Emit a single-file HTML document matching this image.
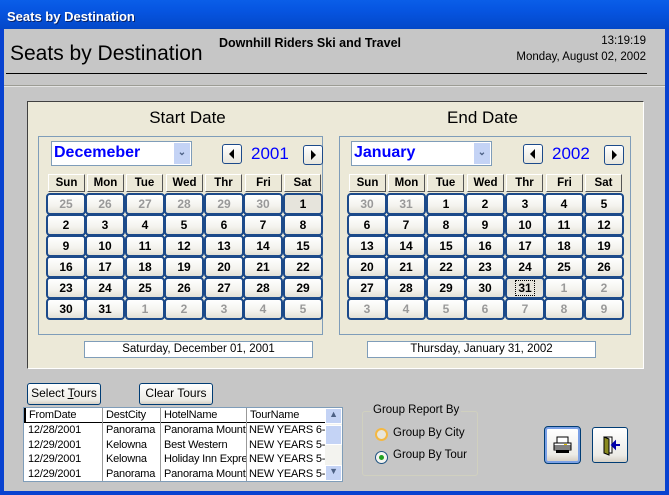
<!DOCTYPE html>
<html><head><style>
*{box-sizing:border-box;margin:0;padding:0}
body{width:669px;height:495px;overflow:hidden;background:#c6c6c6;font-family:"Liberation Sans",sans-serif;position:relative}
.abs{position:absolute}
#title{left:0;top:0;width:669px;height:29px;background:linear-gradient(#0a5ee8,#0654e0 40%,#0348c8);color:#fff;font-weight:bold;font-size:13px;padding:9px 0 0 7px;text-shadow:1px 1px #0a246a}
#lb{left:0;top:29px;width:4px;height:466px;background:#0842d0}
#rb{right:0;top:29px;width:4px;height:466px;background:#0842d0}
#bb{left:0;top:491px;width:669px;height:4px;background:#0842d0}
.cal{border:1px solid #7f9db9}
.hd{position:absolute;height:18px;width:37px;background:#ece9d8;border:1px solid;border-color:#fff #555 #555 #fff;font-size:11.5px;font-weight:bold;text-align:center;line-height:16px}
.c{position:absolute;width:40px;height:22px;background:linear-gradient(#fff,#f4f3ee 60%,#e2e0d6);border:2px solid #1c4a8a;border-radius:4px;font-size:12px;font-weight:bold;text-align:center;line-height:18px;color:#000}
.g{color:#999}
.sel{background:#e6e4dc}
.dd{background:#fff;border:1px solid #7f9db9;color:#0000ff;font-size:16px;font-weight:bold;padding:2px 0 0 2px}
.dda{position:absolute;right:1px;top:1px;width:16px;height:21px;background:#c4d3f5;color:#4d6185;font-size:10px;text-align:center;line-height:20px}
.ab{width:20px;height:20px;background:linear-gradient(#fff,#e8e6dc);border:1px solid #1c4a8a;border-radius:3px}
.yr{color:#0000ff;font-size:17px}
.db{background:#fff;border:1px solid #7f9db9;font-size:11.5px;text-align:center;line-height:15px}
.btn{background:linear-gradient(#fff,#ecebe6 80%,#d6d0c5);border:1px solid #003c74;border-radius:3px;font-size:12px;text-align:center;line-height:19px}
.row{display:flex;height:14.5px}
.row div{overflow:hidden;white-space:nowrap}
</style></head><body>
<div id="title" class="abs">Seats by Destination</div>
<div id="lb" class="abs"></div><div id="rb" class="abs"></div><div id="bb" class="abs"></div>
<div class="abs" style="left:10px;top:42px;font-size:21px">Seats by Destination</div>
<div class="abs" style="left:219px;top:36px;font-size:12.5px;font-weight:bold">Downhill Riders Ski and Travel</div>
<div class="abs" style="left:560px;top:35px;width:86px;text-align:right;font-size:11.5px">13:19:19</div>
<div class="abs" style="left:500px;top:51px;width:146px;text-align:right;font-size:11.5px">Monday, August 02, 2002</div>
<div class="abs" style="left:6px;top:73px;width:641px;height:1px;background:#000"></div>
<div class="abs" style="left:4px;top:85px;width:661px;height:1px;background:#9c9c94"></div>
<div class="abs" style="left:4px;top:86px;width:661px;height:1px;background:#e4e4e4"></div>

<div class="abs" style="left:27px;top:101px;width:617px;height:268px;background:#ece9d8;border:1px solid;border-color:#404040 #fff #fff #404040"></div>
<div class="abs" style="left:100px;top:108px;width:175px;text-align:center;font-size:17px">Start Date</div>
<div class="abs" style="left:395px;top:108px;width:175px;text-align:center;font-size:17px">End Date</div>

<div class="abs cal" style="left:38px;top:136px;width:285px;height:199px"></div>
<div class="abs cal" style="left:339px;top:136px;width:292px;height:199px"></div>

<div class="abs dd" style="left:51px;top:141px;width:141px;height:25px">Decemeber<div class="dda">&#8964;</div></div>
<div class="abs ab" style="left:222px;top:144px"><svg width="18" height="18"><path d="M11 4 L6 9 L11 14Z" fill="#000"/></svg></div>
<div class="abs yr" style="left:251px;top:144px">2001</div>
<div class="abs ab" style="left:303px;top:145px"><svg width="18" height="18"><path d="M7 4 L12 9 L7 14Z" fill="#000"/></svg></div>

<div class="abs dd" style="left:351px;top:141px;width:141px;height:25px">January<div class="dda">&#8964;</div></div>
<div class="abs ab" style="left:523px;top:144px"><svg width="18" height="18"><path d="M11 4 L6 9 L11 14Z" fill="#000"/></svg></div>
<div class="abs yr" style="left:552px;top:144px">2002</div>
<div class="abs ab" style="left:604px;top:145px"><svg width="18" height="18"><path d="M7 4 L12 9 L7 14Z" fill="#000"/></svg></div>

<div class="hd" style="left:48px;top:174px">Sun</div><div class="hd" style="left:87px;top:174px">Mon</div><div class="hd" style="left:126px;top:174px">Tue</div><div class="hd" style="left:166px;top:174px">Wed</div><div class="hd" style="left:205px;top:174px">Thr</div><div class="hd" style="left:245px;top:174px">Fri</div><div class="hd" style="left:284px;top:174px">Sat</div>
<div class="hd" style="left:349px;top:174px">Sun</div><div class="hd" style="left:388px;top:174px">Mon</div><div class="hd" style="left:427px;top:174px">Tue</div><div class="hd" style="left:467px;top:174px">Wed</div><div class="hd" style="left:506px;top:174px">Thr</div><div class="hd" style="left:546px;top:174px">Fri</div><div class="hd" style="left:585px;top:174px">Sat</div>

<div class="c g" style="left:46px;top:193px">25</div><div class="c g" style="left:85px;top:193px">26</div><div class="c g" style="left:125px;top:193px">27</div><div class="c g" style="left:164px;top:193px">28</div><div class="c g" style="left:204px;top:193px">29</div><div class="c g" style="left:243px;top:193px">30</div><div class="c sel" style="left:283px;top:193px">1</div>
<div class="c" style="left:46px;top:214px">2</div><div class="c" style="left:85px;top:214px">3</div><div class="c" style="left:125px;top:214px">4</div><div class="c" style="left:164px;top:214px">5</div><div class="c" style="left:204px;top:214px">6</div><div class="c" style="left:243px;top:214px">7</div><div class="c" style="left:283px;top:214px">8</div>
<div class="c" style="left:46px;top:235px">9</div><div class="c" style="left:85px;top:235px">10</div><div class="c" style="left:125px;top:235px">11</div><div class="c" style="left:164px;top:235px">12</div><div class="c" style="left:204px;top:235px">13</div><div class="c" style="left:243px;top:235px">14</div><div class="c" style="left:283px;top:235px">15</div>
<div class="c" style="left:46px;top:256px">16</div><div class="c" style="left:85px;top:256px">17</div><div class="c" style="left:125px;top:256px">18</div><div class="c" style="left:164px;top:256px">19</div><div class="c" style="left:204px;top:256px">20</div><div class="c" style="left:243px;top:256px">21</div><div class="c" style="left:283px;top:256px">22</div>
<div class="c" style="left:46px;top:277px">23</div><div class="c" style="left:85px;top:277px">24</div><div class="c" style="left:125px;top:277px">25</div><div class="c" style="left:164px;top:277px">26</div><div class="c" style="left:204px;top:277px">27</div><div class="c" style="left:243px;top:277px">28</div><div class="c" style="left:283px;top:277px">29</div>
<div class="c" style="left:46px;top:298px">30</div><div class="c" style="left:85px;top:298px">31</div><div class="c g" style="left:125px;top:298px">1</div><div class="c g" style="left:164px;top:298px">2</div><div class="c g" style="left:204px;top:298px">3</div><div class="c g" style="left:243px;top:298px">4</div><div class="c g" style="left:283px;top:298px">5</div>

<div class="c g" style="left:347px;top:193px">30</div><div class="c g" style="left:386px;top:193px">31</div><div class="c" style="left:426px;top:193px">1</div><div class="c" style="left:465px;top:193px">2</div><div class="c" style="left:505px;top:193px">3</div><div class="c" style="left:544px;top:193px">4</div><div class="c" style="left:584px;top:193px">5</div>
<div class="c" style="left:347px;top:214px">6</div><div class="c" style="left:386px;top:214px">7</div><div class="c" style="left:426px;top:214px">8</div><div class="c" style="left:465px;top:214px">9</div><div class="c" style="left:505px;top:214px">10</div><div class="c" style="left:544px;top:214px">11</div><div class="c" style="left:584px;top:214px">12</div>
<div class="c" style="left:347px;top:235px">13</div><div class="c" style="left:386px;top:235px">14</div><div class="c" style="left:426px;top:235px">15</div><div class="c" style="left:465px;top:235px">16</div><div class="c" style="left:505px;top:235px">17</div><div class="c" style="left:544px;top:235px">18</div><div class="c" style="left:584px;top:235px">19</div>
<div class="c" style="left:347px;top:256px">20</div><div class="c" style="left:386px;top:256px">21</div><div class="c" style="left:426px;top:256px">22</div><div class="c" style="left:465px;top:256px">23</div><div class="c" style="left:505px;top:256px">24</div><div class="c" style="left:544px;top:256px">25</div><div class="c" style="left:584px;top:256px">26</div>
<div class="c" style="left:347px;top:277px">27</div><div class="c" style="left:386px;top:277px">28</div><div class="c" style="left:426px;top:277px">29</div><div class="c" style="left:465px;top:277px">30</div><div class="c sel" style="left:505px;top:277px"><span style="outline:1px dotted #000;padding:0 2px">31</span></div><div class="c g" style="left:544px;top:277px">1</div><div class="c g" style="left:584px;top:277px">2</div>
<div class="c g" style="left:347px;top:298px">3</div><div class="c g" style="left:386px;top:298px">4</div><div class="c g" style="left:426px;top:298px">5</div><div class="c g" style="left:465px;top:298px">6</div><div class="c g" style="left:505px;top:298px">7</div><div class="c g" style="left:544px;top:298px">8</div><div class="c g" style="left:584px;top:298px">9</div>

<div class="abs db" style="left:84px;top:341px;width:229px;height:17px">Saturday, December 01, 2001</div>
<div class="abs db" style="left:367px;top:341px;width:229px;height:17px">Thursday, January 31, 2002</div>

<div class="abs btn" style="left:27px;top:383px;width:74px;height:22px">Select <u>T</u>ours</div>
<div class="abs btn" style="left:139px;top:383px;width:74px;height:22px">Clear Tours</div>

<div class="abs" style="left:23px;top:407px;width:320px;height:75px;background:#fff;border:1px solid #7f9db9;font-size:11px;letter-spacing:-0.2px;overflow:hidden">
<div class="row" style="height:15px;border-bottom:1px solid #000;border-left:2px solid #000;line-height:14px">
<div style="width:77px;border-right:1px solid #000;padding-left:3px">FromDate</div><div style="width:58px;border-right:1px solid #000;padding-left:3px">DestCity</div><div style="width:86px;border-right:1px solid #000;padding-left:3px">HotelName</div><div style="padding-left:3px">TourName</div></div>
<div style="line-height:14.5px">
<div class="row"><div style="width:79px;padding-left:4px">12/28/2001</div><div style="width:58px;padding-left:3px">Panorama</div><div style="width:86px;padding-left:3px">Panorama Mountain</div><div style="width:78px;padding-left:2px">NEW YEARS 6-</div></div>
<div class="row"><div style="width:79px;padding-left:4px">12/29/2001</div><div style="width:58px;padding-left:3px">Kelowna</div><div style="width:86px;padding-left:3px">Best Western</div><div style="width:78px;padding-left:2px">NEW YEARS 5-</div></div>
<div class="row"><div style="width:79px;padding-left:4px">12/29/2001</div><div style="width:58px;padding-left:3px">Kelowna</div><div style="width:86px;padding-left:3px">Holiday Inn Express</div><div style="width:78px;padding-left:2px">NEW YEARS 5-</div></div>
<div class="row"><div style="width:79px;padding-left:4px">12/29/2001</div><div style="width:58px;padding-left:3px">Panorama</div><div style="width:86px;padding-left:3px">Panorama Mountain</div><div style="width:78px;padding-left:2px">NEW YEARS 5-</div></div>
</div>
<div style="position:absolute;left:78px;top:0;width:1px;height:75px;background:#999"></div>
<div style="position:absolute;left:136px;top:0;width:1px;height:75px;background:#999"></div>
<div style="position:absolute;left:222px;top:0;width:1px;height:75px;background:#999"></div>
<div style="position:absolute;right:0;top:0;width:17px;height:73px;background:#f3f3ef">
<div style="height:16px;background:#c4d3f5;border:1px solid #fff;color:#4d6185;font-size:9px;text-align:center">&#9650;</div>
<div style="margin-top:1px;height:20px;background:#c4d3f5;border:1px solid #fff"></div>
<div style="position:absolute;bottom:0;width:17px;height:16px;background:#c4d3f5;border:1px solid #fff;color:#4d6185;font-size:9px;text-align:center">&#9660;</div>
</div></div>

<div class="abs" style="left:362px;top:411px;width:116px;height:65px;border:1px solid #d0d0bf;border-radius:3px"></div>
<div class="abs" style="left:371px;top:404px;background:#c6c6c6;padding:0 2px;font-size:11.5px">Group Report By</div>
<div class="abs" style="left:375px;top:428px;width:13px;height:13px;border-radius:50%;background:#e8e6dc;border:2px solid #f4b842"></div>
<div class="abs" style="left:393px;top:427px;font-size:11.5px">Group By City</div>
<div class="abs" style="left:375px;top:451px;width:13px;height:13px;border-radius:50%;background:#f4f4f0;border:1px solid #1c5180"><div style="margin:3px;width:5px;height:5px;border-radius:50%;background:#21a121"></div></div>
<div class="abs" style="left:393px;top:449px;font-size:11.5px">Group By Tour</div>

<div class="abs btn" style="left:545px;top:427px;width:35px;height:36px;border:2px solid #7aa0e6;outline:1px solid #003c74">
<svg width="31" height="32" viewBox="0 0 31 32"><rect x="10" y="8" width="11" height="6" fill="#fff" stroke="#000"/><rect x="7" y="14" width="17" height="7" fill="#fff" stroke="#000"/><path d="M7 17h17M7 19h17" stroke="#000"/><rect x="9" y="21" width="13" height="3" fill="#000"/><rect x="17" y="15" width="3" height="1" fill="#e0c000"/></svg></div>
<div class="abs btn" style="left:592px;top:427px;width:36px;height:36px">
<svg width="34" height="34" viewBox="0 0 34 34"><rect x="11" y="9" width="8" height="16" fill="#fff" stroke="#000"/><path d="M11 9 L16 11 L16 27 L11 25Z" fill="#8a8a20" stroke="#000"/><path d="M27 17 L22 17 M22 14 L19 17 L22 20Z" stroke="#00a" fill="#00a" stroke-width="2"/></svg></div>
</body></html>
